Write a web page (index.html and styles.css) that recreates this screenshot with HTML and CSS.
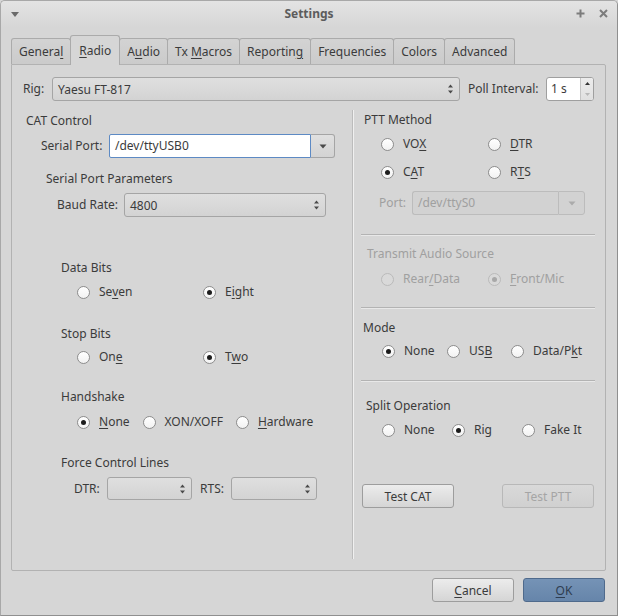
FILE: index.html
```html
<!DOCTYPE html>
<html>
<head>
<meta charset="utf-8">
<title>Settings</title>
<link rel="stylesheet" href="styles.css">
</head>
<body>
<div class="window">
  <div class="titlebar">
    <div class="tb-left">
      <svg class="tb-menu" width="8" height="5" viewBox="0 0 8 5"><path d="M0 0H8L4 5Z"/></svg>
    </div>
    <div class="title">Settings</div>
    <div class="tb-right">
      <svg class="tb-btn" width="9" height="9" viewBox="0 0 9 9"><path d="M4.5 0.5V8.5M0.5 4.5H8.5"/></svg>
      <svg class="tb-btn" width="9" height="9" viewBox="0 0 9 9"><path d="M1 1L8 8M8 1L1 8"/></svg>
    </div>
  </div>

  <div class="tabs">
    <div class="tab">Genera<u>l</u></div>
    <div class="tab active"><u>R</u>adio</div>
    <div class="tab">A<u>u</u>dio</div>
    <div class="tab">Tx <u>M</u>acros</div>
    <div class="tab">Reportin<u>g</u></div>
    <div class="tab">Frequencies</div>
    <div class="tab">Colors</div>
    <div class="tab">Advanced</div>
  </div>

  <div class="panel">
    <div class="rig-row">
      <span class="lbl rig-lbl">Rig:</span>
      <div class="combo rig-combo"><span>Yaesu FT-817</span><svg class="updown" width="7" height="12" viewBox="0 0 7 12"><path d="M1 4.5L3.5 1.5L6 4.5Z M1 7.5L3.5 10.5L6 7.5Z"/></svg></div>
      <span class="lbl poll-lbl">Poll Interval:</span>
      <div class="spin poll-spin"><span class="spin-text">1 s</span><div class="spin-btns"><svg width="7" height="22" viewBox="0 0 7 22"><path class="up" d="M1 7L3.5 4L6 7Z"/><path class="down" d="M1 15L3.5 18L6 15Z"/></svg></div></div>
    </div>

    <div class="cols">
      <div class="left">
        <div class="gtitle cat-title">CAT Control</div>
        <div class="frow serial-row">
          <span class="lbl serial-lbl">Serial Port:</span>
          <div class="ecombo">
            <div class="ecombo-field">/dev/ttyUSB0</div>
            <div class="ecombo-btn"><svg width="8" height="5" viewBox="0 0 8 5"><path d="M0.5 0.5H7.5L4 4.5Z"/></svg></div>
          </div>
        </div>
        <div class="gtitle spp-title">Serial Port Parameters</div>
        <div class="frow baud-row">
          <span class="lbl baud-lbl">Baud Rate:</span>
          <div class="combo baud-combo"><span>4800</span><svg class="updown" width="7" height="12" viewBox="0 0 7 12"><path d="M1 4.5L3.5 1.5L6 4.5Z M1 7.5L3.5 10.5L6 7.5Z"/></svg></div>
        </div>

        <div class="gtitle sub-title data-title">Data Bits</div>
        <div class="radios two-col data-row">
          <label class="radio"><span class="dot"></span><span class="rtext">Se<u>v</u>en</span></label>
          <label class="radio checked"><span class="dot"></span><span class="rtext">E<u>i</u>ght</span></label>
        </div>

        <div class="gtitle sub-title stop-title">Stop Bits</div>
        <div class="radios two-col stop-row">
          <label class="radio"><span class="dot"></span><span class="rtext">On<u>e</u></span></label>
          <label class="radio checked"><span class="dot"></span><span class="rtext">T<u>w</u>o</span></label>
        </div>

        <div class="gtitle sub-title hand-title">Handshake</div>
        <div class="radios hand-row">
          <label class="radio checked"><span class="dot"></span><span class="rtext"><u>N</u>one</span></label>
          <label class="radio"><span class="dot"></span><span class="rtext">XON/XOFF</span></label>
          <label class="radio"><span class="dot"></span><span class="rtext"><u>H</u>ardware</span></label>
        </div>

        <div class="gtitle sub-title force-title">Force Control Lines</div>
        <div class="frow force-row">
          <span class="lbl dtr-lbl">DTR:</span>
          <div class="combo small-combo"><span></span><svg class="updown" width="7" height="12" viewBox="0 0 7 12"><path d="M1 4.5L3.5 1.5L6 4.5Z M1 7.5L3.5 10.5L6 7.5Z"/></svg></div>
          <span class="lbl rts-lbl">RTS:</span>
          <div class="combo small-combo rts-combo"><span></span><svg class="updown" width="7" height="12" viewBox="0 0 7 12"><path d="M1 4.5L3.5 1.5L6 4.5Z M1 7.5L3.5 10.5L6 7.5Z"/></svg></div>
        </div>
      </div>

      <div class="vsep"></div>

      <div class="right">
        <div class="gtitle ptt-title">PTT Method</div>
        <div class="radios ptt-grid">
          <label class="radio"><span class="dot"></span><span class="rtext">VO<u>X</u></span></label>
          <label class="radio"><span class="dot"></span><span class="rtext"><u>D</u>TR</span></label>
          <label class="radio checked"><span class="dot"></span><span class="rtext">C<u>A</u>T</span></label>
          <label class="radio"><span class="dot"></span><span class="rtext">R<u>T</u>S</span></label>
        </div>
        <div class="frow port-row">
          <span class="lbl disabled port-lbl">Port:</span>
          <div class="dcombo">
            <div class="dcombo-field">/dev/ttyS0</div>
            <div class="dcombo-btn"><svg width="8" height="5" viewBox="0 0 8 5"><path d="M0.5 0.5H7.5L4 4.5Z"/></svg></div>
          </div>
        </div>
        <div class="hline hl1"></div>
        <div class="gtitle disabled tas-title">Transmit Audio Source</div>
        <div class="radios two-col-r tas-row">
          <label class="radio disabled"><span class="dot"></span><span class="rtext">Rear<u>/</u>Data</span></label>
          <label class="radio disabled checked"><span class="dot"></span><span class="rtext"><u>F</u>ront/Mic</span></label>
        </div>
        <div class="hline hl2"></div>
        <div class="gtitle mode-title">Mode</div>
        <div class="radios mode-row">
          <label class="radio checked"><span class="dot"></span><span class="rtext">None</span></label>
          <label class="radio"><span class="dot"></span><span class="rtext">US<u>B</u></span></label>
          <label class="radio"><span class="dot"></span><span class="rtext">Data/P<u>k</u>t</span></label>
        </div>
        <div class="hline hl3"></div>
        <div class="gtitle split-title">Split Operation</div>
        <div class="radios split-row">
          <label class="radio"><span class="dot"></span><span class="rtext">None</span></label>
          <label class="radio checked"><span class="dot"></span><span class="rtext">Rig</span></label>
          <label class="radio"><span class="dot"></span><span class="rtext">Fake It</span></label>
        </div>
        <div class="test-row">
          <button class="btn test-btn">Test CAT</button>
          <button class="btn test-btn" disabled>Test PTT</button>
        </div>
      </div>
    </div>
  </div>

  <div class="dlg-buttons">
    <button class="btn dlg-btn"><u>C</u>ancel</button>
    <button class="btn dlg-btn ok"><u>O</u>K</button>
  </div>
</div>
</body>
</html>
```

FILE: styles.css
```css
* { box-sizing: border-box; }
html, body { margin: 0; padding: 0; }
body {
  font-family: "Noto Sans", "Open Sans", sans-serif;
  font-size: 12px;
  color: #3b3b3b;
  background: #d6d6d6;
}
u { text-decoration: underline; text-underline-offset: 2px; text-decoration-thickness: 1px; }

.window {
  width: 618px;
  height: 616px;
  border: 1px solid #8f8f8f;
  border-top-color: #a8a8a8;
  border-left-color: #a8a8a8;
  border-radius: 5px 5px 0 0;
  background: #d6d6d6;
  overflow: hidden;
}

/* title bar */
.titlebar {
  height: 27px;
  padding-bottom: 2px;
  display: grid;
  grid-template-columns: 1fr auto 1fr;
  align-items: center;
  background: linear-gradient(#e3e3e3, #d6d6d6);
}
.tb-left { padding-left: 10px; display: flex; align-items: center; }
.tb-menu { fill: #6a6a6a; margin-top: 1px; }
.title { font-weight: bold; color: #5c5c5c; font-size: 12px; line-height: 16px; }
.tb-right { display: flex; justify-content: flex-end; gap: 14px; padding-right: 9px; align-items: center; }
.tb-btn { stroke: #7c7c7c; stroke-width: 2; fill: none; }

/* tabs */
.tabs {
  display: flex;
  align-items: flex-end;
  margin: 7px 0 0 10px;
  height: 29px;
}
.tab {
  height: 26px;
  padding: 0 7px;
  border: 1px solid #ababab;
  border-bottom: none;
  border-radius: 3px 3px 0 0;
  background: linear-gradient(#d3d3d3, #cbcbcb);
  line-height: 25px;
  margin-right: -1px;
  white-space: nowrap;
}
.tab.active {
  height: 30px;
  margin-bottom: -1px;
  line-height: 29px;
  background: #d6d6d6;
  position: relative;
  z-index: 1;
  padding: 0 8px;
}

/* panel */
.panel {
  margin-left: 10px;
  width: 595px;
  height: 507px;
  border: 1px solid #b2b2b2;
  border-radius: 0 2px 2px 2px;
  padding: 12px 10px 0 11px;
}

.lbl { white-space: nowrap; line-height: 16px; }
.disabled { color: #a0a0a0; }

.rig-row { display: flex; align-items: center; height: 24px; }
.rig-lbl { width: 29px; }
.rig-combo { width: 408px; }
.poll-lbl { width: 86px; padding-left: 8px; }

.combo {
  height: 24px;
  display: flex;
  align-items: center;
  justify-content: space-between;
  border: 1px solid #a5a5a5;
  border-radius: 3px;
  background: linear-gradient(#dfdfdf, #d3d3d3);
  padding: 0 5px 0 5px;
  white-space: nowrap;
}
.updown { fill: #4a4a4a; }

.spin {
  width: 48px;
  height: 24px;
  display: flex;
  border: 1px solid #9f9f9f;
  border-radius: 3px;
  background: #fff;
  overflow: hidden;
}
.spin-text { flex: 1; padding-left: 4px; line-height: 22px; }
.spin-btns {
  width: 13px;
  border-left: 1px solid #c4c4c4;
  background: linear-gradient(#ececec, #e0e0e0);
  display: flex;
  align-items: center;
  justify-content: center;
}
.spin-btns .up { fill: #333; }
.spin-btns .down { fill: #b8b8b8; }

/* columns */
.cols { display: flex; }
.left { width: 330px; }
.vsep {
  width: 1px;
  margin-top: 9px;
  height: 449px;
  background: #f0f0f0;
  box-shadow: -1px 0 0 #bcbcbc;
}
.right { width: 240px; padding-left: 7px; }

.gtitle { line-height: 18px; height: 16px; white-space: nowrap; }
.frow { display: flex; align-items: center; }

/* left column */
.cat-title { margin: 11px 0 0 3px; }
.serial-row { margin: 6px 0 0 18px; height: 24px; }
.serial-lbl { width: 68px; }
.ecombo { display: flex; height: 24px; }
.ecombo-field {
  width: 202px;
  background: #fff;
  border: 1px solid #5d8ac4;
  border-radius: 2px 0 0 2px;
  padding-left: 5px;
  line-height: 22px;
}
.ecombo-btn {
  width: 24px;
  border: 1px solid #a5a5a5;
  border-left: none;
  border-radius: 0 3px 3px 0;
  background: linear-gradient(#e0e0e0, #d3d3d3);
  display: flex;
  align-items: center;
  justify-content: center;
}
.ecombo-btn svg { fill: #4a4a4a; }

.spp-title { margin: 12px 0 0 23px; }
.baud-row { margin: 7px 0 0 34px; height: 24px; }
.baud-lbl { width: 67px; }
.baud-combo { width: 202px; }

.sub-title { margin-left: 38px; }
.data-title { margin-top: 42px; }
.stop-title { margin-top: 25px; }
.hand-title { margin-top: 23px; }
.force-title { margin-top: 24px; }

.radios { margin-left: 54px; }
.data-row { margin-top: 9px; }
.stop-row { margin-top: 8px; }
.hand-row { margin-top: 10px; display: flex; gap: 13px; }
.two-col { display: grid; grid-template-columns: 126px 100px; }

.radio {
  display: flex;
  align-items: center;
  gap: 9px;
  height: 16px;
  white-space: nowrap;
}
.rtext { line-height: 16px; }
.radio .dot {
  flex: none;
  width: 13px;
  height: 13px;
  border-radius: 50%;
  border: 1px solid #8d8d8d;
  background: linear-gradient(#ffffff, #f2f2f2);
  display: flex;
  align-items: center;
  justify-content: center;
}
.radio.checked .dot::after {
  content: "";
  width: 5px;
  height: 5px;
  border-radius: 50%;
  background: #1c1c1c;
}
.radio.disabled { color: #a0a0a0; }
.radio.disabled .dot { border-color: #bababa; background: #d9d9d9; }
.radio.disabled.checked .dot::after { background: #a8a8a8; }

.force-row { margin: 7px 0 0 51px; height: 23px; }
.dtr-lbl { width: 33px; }
.small-combo { width: 85px; height: 23px; }
.rts-lbl { width: 31px; margin-left: 8px; }
.rts-combo { width: 86px; }

/* right column */
.ptt-title { margin: 10px 0 0 3px; }
.ptt-grid {
  display: grid;
  grid-template-columns: 107px 100px;
  row-gap: 12px;
  margin: 9px 0 0 20px;
}
.port-row { margin: 11px 0 0 18px; height: 24px; }
.port-lbl { width: 33px; }
.dcombo { display: flex; width: 173px; height: 24px; }
.dcombo-field {
  flex: 1;
  border: 1px solid #bcbcbc;
  border-right: none;
  border-radius: 3px 0 0 3px;
  background: #d2d2d2;
  color: #a0a0a0;
  padding-left: 5px;
  line-height: 22px;
}
.dcombo-btn {
  width: 27px;
  border: 1px solid #bcbcbc;
  border-radius: 0 3px 3px 0;
  background: #d2d2d2;
  display: flex;
  align-items: center;
  justify-content: center;
}
.dcombo-btn svg { fill: #ababab; }

.hline {
  width: 234px;
  height: 2px;
  border-top: 1px solid #b3b3b3;
  border-bottom: 1px solid #e8e8e8;
}
.hl1 { margin-top: 19px; }
.tas-title { margin: 9px 0 0 6px; }
.two-col-r { display: grid; grid-template-columns: 107px 100px; }
.tas-row { margin: 10px 0 0 20px; }
.hl2 { margin-top: 20px; }
.mode-title { margin: 10px 0 0 2px; }
.mode-row { display: grid; grid-template-columns: 65px 64px 80px; margin: 8px 0 0 21px; }
.hl3 { margin-top: 21px; }
.split-title { margin: 15px 0 0 5px; }
.split-row { display: grid; grid-template-columns: 70px 70px 80px; margin: 9px 0 0 21px; }

.btn {
  font-family: inherit;
  font-size: 12px;
  color: #3b3b3b;
  height: 24px;
  border: 1px solid #9d9d9d;
  border-radius: 3px;
  background: linear-gradient(#ececec, #d5d5d5);
  padding: 0;
}
.btn:disabled {
  color: #a5a5a5;
  border-color: #b8b8b8;
  background: linear-gradient(#d9d9d9, #d0d0d0);
}
.test-row { display: flex; gap: 48px; margin: 46px 0 0 1px; }
.test-btn { width: 92px; }

.dlg-buttons {
  display: flex;
  justify-content: flex-end;
  gap: 9px;
  margin: 7px 12px 0 0;
}
.dlg-btn { width: 82px; }
.dlg-btn.ok {
  background: linear-gradient(#7593b6, #6685aa);
  border-color: #4f6a8c;
  color: #2f3d50;
}
```
